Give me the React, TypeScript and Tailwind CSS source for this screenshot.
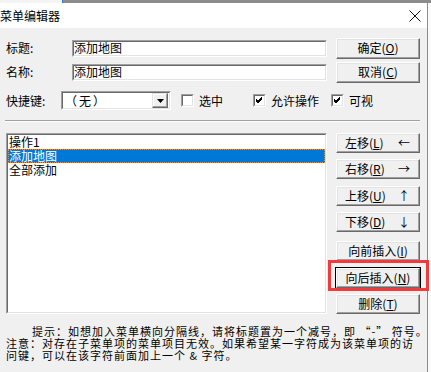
import React from "react";

const btnBase =
  "h-[20px] w-[84px] flex items-center text-[12px] leading-none text-black bg-[#f0f0f0] border border-t-white border-l-white border-b-[#696969] border-r-[#696969] shadow-[inset_-1px_-1px_#a0a0a0,inset_1px_1px_#e3e3e3]";

function Btn({
  children,
  className = "",
}: {
  children: React.ReactNode;
  className?: string;
}) {
  return <div className={`${btnBase} ${className}`}>{children}</div>;
}

function U({ children }: { children: React.ReactNode }) {
  return <span className="underline underline-offset-[1px]">{children}</span>;
}

function Sunken({
  className = "",
  children,
}: {
  className?: string;
  children?: React.ReactNode;
}) {
  return (
    <div
      className={`border border-t-[#a0a0a0] border-l-[#a0a0a0] border-b-white border-r-white ${className}`}
    >
      <div className="h-full w-full border border-t-[#696969] border-l-[#696969] border-b-[#e3e3e3] border-r-[#e3e3e3] bg-white">
        {children}
      </div>
    </div>
  );
}

function Check({ checked, label }: { checked: boolean; label: string }) {
  return (
    <div className="flex items-center gap-[5px]">
      <div className="w-[13px] h-[13px] border border-t-[#a0a0a0] border-l-[#a0a0a0] border-b-white border-r-white">
        <div className="w-full h-full border border-t-[#696969] border-l-[#696969] border-b-[#e3e3e3] border-r-[#e3e3e3] bg-white flex items-center justify-center">
          {checked && (
            <svg width="7" height="7" viewBox="0 0 7 7">
              <path
                d="M0 2 L2 4 L6 0 M0 3 L2 5 L6 1 M0 4 L2 6 L6 2"
                stroke="black"
                strokeWidth="1"
                fill="none"
                shapeRendering="crispEdges"
              />
            </svg>
          )}
        </div>
      </div>
      <span className="text-[12px] leading-none">{label}</span>
    </div>
  );
}

export default function App() {
  return (
    <div className="relative w-[431px] h-[372px] overflow-hidden bg-[#fafafa] text-black font-['Noto_Sans_CJK_SC','Liberation_Sans',sans-serif]">
      {/* top strip of window behind */}
      <div className="flex h-[3px]">
        <div className="w-[62px] bg-[#f4f4f4]" />
        <div className="w-px bg-[#2a7bd4]" />
        <div className="flex-1 bg-[#8c8c8c]" />
      </div>

      <div className="w-[428px] h-[369px] border-r border-[#8c8c8c] bg-[#f0f0f0]">
        {/* title bar */}
        <div className="h-[25px] bg-white flex items-center">
          <span className="text-[12px] leading-none">菜单编辑器</span>
          <svg
            className="ml-auto mr-[6px]"
            width="12"
            height="12"
            viewBox="0 0 12 12"
          >
            <path d="M0.5 0.5 L11.5 11.5 M11.5 0.5 L0.5 11.5" stroke="#111" strokeWidth="1" />
          </svg>
        </div>

        {/* rows with inputs */}
        <div className="pt-[8px]">
          <div className="flex items-center h-[24px] pl-[6px]">
            <span className="w-[66px] text-[12px] leading-none">标题:</span>
            <Sunken className="w-[255px] h-[17px]">
              <div className="h-full flex items-center text-[12px] leading-none">添加地图</div>
            </Sunken>
            <Btn className="ml-[9px] h-[21px] justify-center">
              确定(<U>O</U>)
            </Btn>
          </div>
          <div className="flex items-center h-[24px] pl-[6px]">
            <span className="w-[66px] text-[12px] leading-none">名称:</span>
            <Sunken className="w-[255px] h-[17px]">
              <div className="h-full flex items-center text-[12px] leading-none">添加地图</div>
            </Sunken>
            <Btn className="ml-[9px] h-[21px] justify-center">
              取消(<U>C</U>)
            </Btn>
          </div>
        </div>

        {/* shortcut row */}
        <div className="mt-[5px] h-[23px] pl-[6px] flex items-center">
          <span className="w-[55px] text-[12px] leading-none">快捷键:</span>
          <Sunken className="w-[110px] h-[19px]">
            <div className="h-full flex items-center pr-px">
              <span className="pl-[2px] text-[12px] tracking-[2px] leading-none">（无）</span>
              <div className="ml-auto w-[16px] h-[15px] bg-[#f0f0f0] border border-t-[#e3e3e3] border-l-[#e3e3e3] border-b-[#696969] border-r-[#696969] shadow-[inset_-1px_-1px_#a0a0a0,inset_1px_1px_white] flex items-center justify-center">
                <svg width="7" height="4" viewBox="0 0 7 4">
                  <path d="M0 0 H7 L3.5 4 Z" fill="black" />
                </svg>
              </div>
            </div>
          </Sunken>
          <div className="ml-[10px] w-[72px]">
            <Check checked={false} label="选中" />
          </div>
          <div className="w-[78px]">
            <Check checked={true} label="允许操作" />
          </div>
          <div>
            <Check checked={true} label="可视" />
          </div>
        </div>

        {/* separator */}
        <div className="mt-[8px] ml-[5px] w-[415px]">
          <div className="h-px bg-[#a0a0a0]" />
          <div className="h-px bg-white" />
        </div>

        {/* list + buttons */}
        <div className="mt-[11px] flex">
          <Sunken className="ml-[6px] w-[321px] h-[181px]">
            <div className="text-[12px] leading-[14px]">
              <div className="h-[14px] pl-px">操作1</div>
              <div className="h-[14px] pl-px bg-[#0078d7] text-white outline outline-1 outline-dotted outline-[#ff8728] -outline-offset-1">
                添加地图
              </div>
              <div className="h-[14px] pl-px">全部添加</div>
            </div>
          </Sunken>
          <div className="ml-[9px] flex flex-col">
            <Btn className="justify-between pl-[8px] pr-[9px]">
              <span>
                左移(<U>L</U>)
              </span>
              <span>←</span>
            </Btn>
            <Btn className="mt-[6px] justify-between pl-[8px] pr-[9px]">
              <span>
                右移(<U>R</U>)
              </span>
              <span>→</span>
            </Btn>
            <Btn className="mt-[7px] justify-between pl-[8px] pr-[9px]">
              <span>
                上移(<U>U</U>)
              </span>
              <span>↑</span>
            </Btn>
            <Btn className="mt-[6px] justify-between pl-[8px] pr-[9px]">
              <span>
                下移(<U>D</U>)
              </span>
              <span>↓</span>
            </Btn>
            <Btn className="mt-[9px] justify-center">
              向前插入(<U>I</U>)
            </Btn>
            <Btn className="mt-[7px] justify-center outline outline-1 outline-black">
              向后插入(<U>N</U>)
            </Btn>
            <Btn className="mt-[6px] justify-center">
              删除(<U>T</U>)
            </Btn>
          </div>
        </div>

        {/* hint text */}
        <div className="mt-[11px] pl-[6px] text-[11px] tracking-[1px] leading-[12px] whitespace-nowrap">
          <div className="pl-[26px]">提示：如想加入菜单横向分隔线，请将标题置为一个减号，即 “-” 符号。</div>
          <div>注意：对存在子菜单项的菜单项目无效。如果希望某一字符成为该菜单项的访</div>
          <div>问键，可以在该字符前面加上一个 &amp; 字符。</div>
        </div>
      </div>

      {/* red highlight annotation */}
      <div className="absolute left-[328px] top-[260px] w-[101px] h-[31px] border-[3px] border-[#ef3b3b]" />
    </div>
  );
}
